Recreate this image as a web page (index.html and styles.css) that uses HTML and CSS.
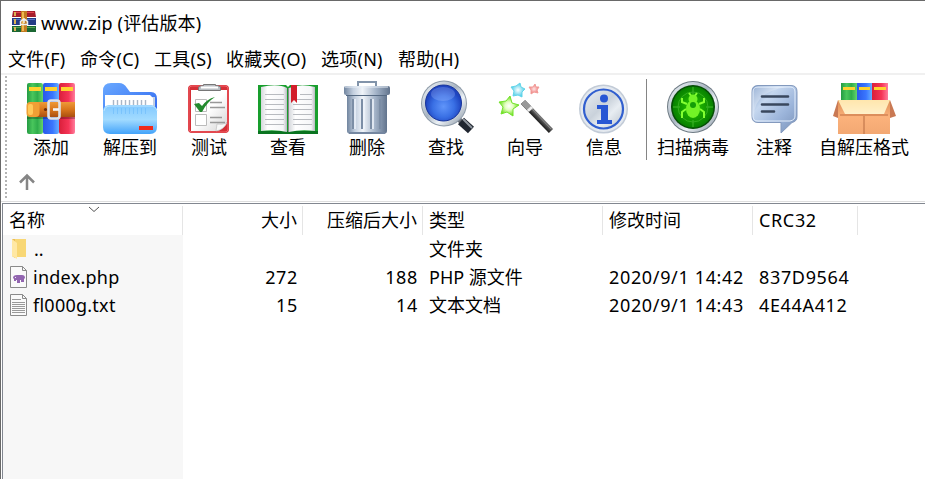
FILE: index.html
```html
<!DOCTYPE html>
<html lang="zh-CN">
<head>
<meta charset="utf-8">
<title>www.zip</title>
<link rel="stylesheet" href="styles.css">
</head>
<body>
<svg class="defs" width="0" height="0" aria-hidden="true">
  <defs>
    <linearGradient id="bookG"><stop offset="0" stop-color="#249b43"/><stop offset=".35" stop-color="#49c65c"/><stop offset=".65" stop-color="#2fad4b"/><stop offset="1" stop-color="#64d36c"/></linearGradient>
    <linearGradient id="bookB"><stop offset="0" stop-color="#2959e8"/><stop offset=".6" stop-color="#3a76ff"/><stop offset="1" stop-color="#65b0ff"/></linearGradient>
    <linearGradient id="bookR"><stop offset="0" stop-color="#d91f3a"/><stop offset=".6" stop-color="#f53557"/><stop offset="1" stop-color="#ff7c9c"/></linearGradient>
    <linearGradient id="belt" x2="0" y2="1"><stop offset="0" stop-color="#ee9a38"/><stop offset=".5" stop-color="#d9761c"/><stop offset="1" stop-color="#a94f10"/></linearGradient>
    <linearGradient id="steel"><stop offset="0" stop-color="#71859f"/><stop offset=".2" stop-color="#c3cfdf"/><stop offset=".4" stop-color="#f0f4f9"/><stop offset=".7" stop-color="#a3b3c8"/><stop offset="1" stop-color="#62748d"/></linearGradient>
    <linearGradient id="folderBack" x2="1" y2="1"><stop offset="0" stop-color="#6aa9ff"/><stop offset="1" stop-color="#2d65ef"/></linearGradient>
    <linearGradient id="folderFront" x2="0" y2="1"><stop offset="0" stop-color="#81c8ff"/><stop offset=".5" stop-color="#a2dbff"/><stop offset="1" stop-color="#43a3fa"/></linearGradient>
    <linearGradient id="page"><stop offset="0" stop-color="#d5d8dc"/><stop offset=".25" stop-color="#fff"/><stop offset=".85" stop-color="#f5f6f8"/><stop offset="1" stop-color="#b9bcc2"/></linearGradient>
    <linearGradient id="paper" x2="1" y2="1"><stop offset=".5" stop-color="#fff"/><stop offset="1" stop-color="#d4d4d4"/></linearGradient>
    <linearGradient id="rim" x2="1" y2="1"><stop offset="0" stop-color="#f4f8fb"/><stop offset=".45" stop-color="#a9b5c2"/><stop offset=".65" stop-color="#edf2f6"/><stop offset="1" stop-color="#808d9c"/></linearGradient>
    <radialGradient id="lens" cy=".6"><stop offset="0" stop-color="#6095fa"/><stop offset=".6" stop-color="#396fe4"/><stop offset="1" stop-color="#1f45c0"/></radialGradient>
    <radialGradient id="green"><stop offset="0" stop-color="#27c800"/><stop offset="1" stop-color="#078000"/></radialGradient>
    <radialGradient id="starG"><stop offset="0" stop-color="#fff"/><stop offset=".4" stop-color="#e3ffc1"/><stop offset="1" stop-color="#65db13"/></radialGradient>
    <radialGradient id="starB"><stop offset="0" stop-color="#fff"/><stop offset="1" stop-color="#48cce8"/></radialGradient>
    <radialGradient id="starR"><stop offset="0" stop-color="#ffe4e4"/><stop offset="1" stop-color="#ee7776"/></radialGradient>
    <linearGradient id="bubble" x2="1" y2="1"><stop offset="0" stop-color="#7898c6"/><stop offset=".3" stop-color="#c5d7ef"/><stop offset=".65" stop-color="#9bb4da"/><stop offset="1" stop-color="#7890b6"/></linearGradient>
    <linearGradient id="box" x2="0" y2="1"><stop offset="0" stop-color="#dd8d54"/><stop offset=".5" stop-color="#fbb27b"/><stop offset="1" stop-color="#f3a873"/></linearGradient>
    <linearGradient id="flap" x2="0" y2="1"><stop offset="0" stop-color="#ffe6ad"/><stop offset="1" stop-color="#fff0c9"/></linearGradient>
    <linearGradient id="wand" x1="1" y1="0" x2="0" y2="1"><stop offset=".4" stop-color="#8b8b8b"/><stop offset=".55" stop-color="#262626"/></linearGradient>
  </defs>
</svg>
<div class="window">
  <header class="titlebar">
    <svg class="app-icon" viewBox="0 0 24 22">
      <path fill="#a51d2c" d="M1 0h22l1 6H0z"/><path fill="#e04450" d="M2 1h20v1H1z"/>
      <path fill="#243c86" d="M0 7h24v7H0z"/><path fill="#5274c9" d="M1 8h22v1H1z"/>
      <path fill="#1b6733" d="M0 15h24v6H0z"/><path fill="#54a352" d="M1 16h22v1H1z"/>
      <path fill="#d9b354" d="M2 1h2v4H2zM2 8h2v5H2zM2 16h2v4H2z"/>
      <path fill="#c27b23" d="M9 0h6v21H9z"/><path fill="#f0b94f" d="M10 1h2v19h-2z"/>
      <path fill="none" stroke="#eee" stroke-width="1.5" d="M8.500 13.500v-3q3.500-4 7 0v3zM12 7v5"/>
    </svg>
    <span>www.zip (评估版本)</span>
  </header>
  <nav class="menu">
    <span>文件(F)</span><span class="wide">命令(C)</span><span>工具(S)</span><span class="fav">收藏夹(O)</span><span class="opt">选项(N)</span><span>帮助(H)</span>
  </nav>
  <section class="toolbar">
    <div class="grip"></div>
    <div class="bars">
      <div class="buttons">
        <div class="button"><svg viewBox="0 0 64 56">
          <rect x="8" y="3" width="16" height="51" rx="2" fill="url(#bookG)"/><rect x="24" y="3" width="16" height="51" rx="2" fill="url(#bookB)"/><rect x="40" y="3" width="16" height="51" rx="2" fill="url(#bookR)"/>
          <path fill="#ffd32e" d="M10 7h12v4H10zM26 7h12v4H26zM42 7h12v4H42z"/>
          <path fill="#000" opacity=".25" d="M8 37h48v2H8z"/>
          <path fill="url(#belt)" d="M11 22h45v15H11l-3-3v-9z"/>
          <rect x="7.500" y="22" width="13" height="15" rx="4" fill="#f09f35"/><rect x="9" y="24" width="5" height="11" rx="2" fill="#ffc95a"/>
          <circle cx="26.500" cy="29.500" r="1.600" fill="#6d2d08"/>
          <rect x="29.500" y="20.500" width="11" height="18" rx="2.500" fill="none" stroke="#dfe1e6" stroke-width="2.600"/>
          <path stroke="#f5f5f5" stroke-width="2.600" d="M34 29.500h6"/>
        </svg><span>添加</span></div>
        <div class="button"><svg viewBox="0 0 64 56">
          <path fill="url(#folderBack)" d="M5 11q0-8 8-8h8q5 0 8 5l3 4h21q6 0 6 7v18H5z"/>
          <path fill="#c4d1e3" d="M10 17h47v23H10z"/><path fill="#fff" d="M7 15h45l3 3v20H7z"/>
          <path stroke="#aab6c6" stroke-width="1.400" d="M15.500 20v6m4-6v6m4-6v6m4-6v6m4-6v6m4-6v6m4-6v6m4-6v6m4-6v6"/>
          <path fill="url(#folderFront)" d="M5 31q0-5 6-6h42q6 1 6 6v16q0 7-7 7H12q-7 0-7-7z"/>
          <path stroke="#bce6ff" fill="none" d="M6 31q1-5 6-5h40q6 0 7 5"/>
          <path stroke="#61b4fa" opacity=".45" d="M15.500 28v6m4-6v6m4-6v6m4-6v6m4-6v6m4-6v6m4-6v6m4-6v6m4-6v6"/>
          <path fill="#ef2b1b" d="M41 46h14v4H41z"/>
        </svg><span>解压到</span></div>
        <div class="button"><svg viewBox="0 0 64 56">
          <rect x="11" y="5" width="41" height="48" rx="4" fill="#d52f37"/><rect x="12" y="6" width="39" height="46" rx="3" fill="none" stroke="#f06368"/>
          <path fill="url(#paper)" d="M14 10h36v32q-3 8-11 9H14z"/><path fill="#f8f8f8" stroke="#bbb" stroke-width=".6" d="M50 43q-5 2-10 1l-1 7q7-1 11-8z"/>
          <path fill="#b9bec3" stroke="#777" d="M21.500 10.500v-3q1-2 5-2v-1h12v1q5 0 5 2v3z"/><path stroke="#fff" stroke-width="2" d="M24 7.500h17"/>
          <path fill="#fff" stroke="#bbb" d="M18.500 19.500h11v12h-11zM18.500 34.500h11v11h-11z"/>
          <path stroke="#999" stroke-width="1.300" d="M33 22.500h12M33 27.500h15M33 37.500h12M33 42.500h15"/>
          <path fill="#238a2e" d="m17 24 5-1 3 3q5-7 13-9-8 5-13 15h-2z"/>
        </svg><span>测试</span></div>
        <div class="button"><svg viewBox="0 0 64 56">
          <path fill="#189e2d" d="M2 5h28l2 2 2-2h28v49H34l-2-1-2 1H2z"/><path fill="#0a7420" d="M2 51h60v3H2z"/>
          <path fill="url(#page)" d="M5 7q17-4 26 1v44q-12-3-26-1z"/><path fill="url(#page)" d="M33 8q11-5 26-1v44q-14-2-26 1z"/>
          <path stroke="#888" d="M32.500 8v44"/>
          <path stroke="#b8bbc0" stroke-width="1.200" d="M9 14.500h19m-19 5h19m-19 5h19m-19 5h19m-19 5h19m-19 5h19m-19 5h19M37 19.500h19m-19 5h19m-19 5h19m-19 5h19m-19 5h19m-19 5h19M44 14.500h12"/>
          <path fill="#d21e2a" d="M35 5h6v18l-3-3-3 3z"/>
        </svg><span>查看</span></div>
        <div class="button"><svg viewBox="0 0 64 56">
          <path fill="none" stroke="#8294aa" stroke-width="2" d="M23 7V2h18v5"/>
          <path fill="url(#steel)" d="M12 15h40v36q0 3-4 3H16q-4 0-4-3z"/>
          <path stroke="#7c8ea6" stroke-width="2" d="M18 19v30m9-30v30m9-30v30m9-30v30"/><path stroke="#eef4fb" stroke-width="1.500" d="M20 19v30m9-30v30m9-30v30"/>
          <rect x="9" y="6" width="46" height="9" rx="2" fill="url(#steel)"/><path stroke="#566a83" d="M11 15.500h41"/><path stroke="#e9f0f8" d="M10 7h43"/>
          <path fill="#7486a0" d="M14 52h36v2H14z"/>
        </svg><span>删除</span></div>
        <div class="button"><svg viewBox="0 0 64 56">
          <path stroke="#666b73" stroke-width="5" d="m43 38 5 4"/><path stroke="#202630" stroke-width="9" d="m47 41 10 9"/><path stroke="#8f969f" stroke-width="2" d="m49 39 9 9"/>
          <circle cx="30" cy="23.500" r="23" fill="#8e9ba9"/><circle cx="30" cy="23.500" r="22" fill="url(#rim)"/><circle cx="29.500" cy="23" r="18" fill="url(#lens)" stroke="#18349a"/>
          <ellipse cx="29" cy="14" rx="12" ry="7" fill="#a3bdff" opacity=".3"/>
        </svg><span>查找</span></div>
        <div class="button"><svg viewBox="0 0 64 56">
          <path fill="url(#starG)" stroke="#73e32b" d="m17 16 2 7 7 2-6 4v7l-6-4-6 2 2-7-4-5 7-1z"/>
          <path fill="url(#starB)" stroke="#62d5e9" d="m27 3 1 4 4 2-3 3v5l-4-2-5 1 1-5-3-4 5-1z"/>
          <path fill="url(#starR)" stroke="#f19b97" d="m42 4 1 3h3l-2 3 1 3-4-1-3 2v-4l-2-3h4z"/>
          <path stroke="url(#wand)" stroke-width="6" d="m30 22 28 29"/><path stroke="#999" stroke-width="6" d="m30 22 7 7"/><path stroke="#eee" stroke-width="6" d="m36 28 2 2"/><path stroke="#888" stroke-width="1" d="m39 29 19 20"/>
        </svg><span>向导</span></div>
        <div class="button"><svg viewBox="0 0 64 56">
          <circle cx="31.500" cy="29" r="24.500" fill="#c2cbd7"/><circle cx="31.500" cy="29" r="23" fill="#e4e9ef"/><circle cx="31.500" cy="29" r="20" fill="url(#rim)" opacity=".45"/><circle cx="31.500" cy="29" r="19.500" fill="none" stroke="#315fcf" stroke-width="2.200"/>
          <circle cx="32" cy="18.500" r="4" fill="#2857d4"/><path fill="#2857d4" d="M25 25h11v15h4v4H25v-4h4V29h-4z"/>
        </svg><span>信息</span></div>
        <div class="divider"></div>
        <div class="button"><svg viewBox="0 0 64 56">
          <circle cx="32" cy="27" r="26" fill="#6d7a83"/><circle cx="32" cy="27" r="25" fill="url(#rim)"/><circle cx="32" cy="27" r="22" fill="#064d05"/><circle cx="32" cy="27" r="20.500" fill="url(#green)"/>
          <path fill="none" stroke="#43b92d" d="M32 7v7m0 26v7M12 27h7m26 0h7"/><circle cx="32" cy="27" r="15" fill="none" stroke="#34ae20"/>
          <path fill="none" stroke="#83ff31" stroke-width="2" d="m28 13 3 4m5-4-3 4M26 24l-5-2v-4m17 6 5-2v-4M25 29l-4 3v6m18-9 4 3v6"/>
          <ellipse cx="32" cy="29" rx="7" ry="9" fill="#72f326"/><circle cx="32" cy="19" r="4.500" fill="#72f326"/><circle cx="32" cy="25" r="3" fill="#149e08"/>
        </svg><span>扫描病毒</span></div>
        <div class="button comment"><svg viewBox="0 0 64 56">
          <path fill="url(#bubble)" stroke="#8399bd" d="M16 5.500h33q6 0 6 6v25q0 5-5 6L39 53V42.500H16q-6 0-6-6v-25q0-6 6-6z"/>
          <path fill="none" stroke="#e4eefb" d="M16 7h32q5 0 5 5v24q0 4-5 5H16q-5 0-5-5V12q0-5 5-5"/>
          <path fill="#fff" opacity=".25" d="M12 36Q12 12 45 7H16q-5 1-5 6z"/>
          <path stroke="#39475d" stroke-width="2.600" stroke-linecap="round" d="M20 16.500h26M20 24.500h26M20 31.500h12"/>
        </svg><span>注释</span></div>
        <div class="button sfx"><svg viewBox="0 0 64 56">
          <path fill="url(#bookG)" d="M9 3h16v20H9z"/><path fill="url(#bookB)" d="M25 3h15v20H25z"/><path fill="url(#bookR)" d="M40 3h16v20H40z"/><path fill="#ffd32e" d="M11 7h12v3H11zM27 7h11v3H27zM42 7h12v3H42z"/>
          <path fill="#c97953" d="m6 20-5 16 5 2zm52 0 6 16-6 2z"/><path fill="url(#box)" d="M6 20h52v34H6z"/><path stroke="#b86c43" d="M32 34v20"/><path fill="#dc8e5c" d="M8 34h48v2H8z"/><path fill="url(#flap)" d="M6 20h52l-6 14H13z"/>
        </svg><span>自解压格式</span></div>
      </div>
      <svg class="up" viewBox="0 0 18 18"><path fill="none" stroke="#858585" stroke-width="2.500" d="M9 17V3M2 9.500 9 2.500l7 7"/></svg>
    </div>
  </section>
  <main class="files">
    <div class="row head">
      <div class="name">名称<svg class="sort" viewBox="0 0 12 7"><path fill="none" stroke="#555" d="m1 1 5 4.500L11 1"/></svg></div>
      <div class="num">大小</div><div class="num">压缩后大小</div><div class="type">类型</div><div class="time">修改时间</div><div class="crc latin">CRC32</div>
    </div>
    <div class="row">
      <div class="name"><svg class="file-icon" viewBox="0 0 18 22"><path fill="#f8d775" d="M4 1h12v18H4z"/><path fill="#eabd58" d="M2 1h3v19l-3-2z"/><path fill="#ffe8a4" d="m2 1 5 4v16l-5-3z"/></svg><span>..</span></div>
      <div class="num"></div><div class="num"></div><div class="type">文件夹</div><div class="time"></div><div class="crc"></div>
    </div>
    <div class="row">
      <div class="name"><svg class="file-icon" viewBox="0 0 18 22"><path fill="#fafafa" stroke="#8a8a8a" d="M.500.500h12l4 4v17H.500zM12.500.500v4h4"/><path fill="#9265b0" d="M3 12q0-3 4-3h5q3 0 3 3l-1 1v3h-3v-2h-1v3H7v-3H6v1H4v-2z"/><circle cx="5.500" cy="11.500" r=".6" fill="#fff"/></svg><span class="latin file">index.php</span></div>
      <div class="num latin">272</div><div class="num latin">188</div><div class="type">PHP 源文件</div><div class="time latin">2020/9/1 14:42</div><div class="crc latin">837D9564</div>
    </div>
    <div class="row">
      <div class="name"><svg class="file-icon" viewBox="0 0 18 22"><path fill="#fafafa" stroke="#8a8a8a" d="M.500.500h12l4 4v17H.500zM12.500.500v4h4"/><path stroke="#999" d="M2 5.500h9M2 8.500h13M2 10.500h13M2 12.500h13M2 14.500h13M2 16.500h13M2 18.500h13"/></svg><span class="latin file">fl000g.txt</span></div>
      <div class="num latin">15</div><div class="num latin">14</div><div class="type">文本文档</div><div class="time latin">2020/9/1 14:43</div><div class="crc latin">4E44A412</div>
    </div>
    <div class="filler"></div>
  </main>
</div>
</body>
</html>
```
FILE: styles.css
```css
* { box-sizing: border-box; }
body {
  margin: 0;
  background: #fff;
  color: #000;
  font: 18px/28px "Noto Sans", "Noto Sans CJK SC", sans-serif;
  white-space: nowrap;
}
.defs { position: absolute; }
.window {
  width: 925px;
  height: 479px;
  border-top: 1px solid #696969;
  border-left: 1px solid #696969;
  overflow: hidden;
  display: flex;
  flex-direction: column;
}
.titlebar {
  height: 44px;
  padding-left: 11px;
  display: flex;
  align-items: center;
  gap: 5px;
  letter-spacing: .15px;
}
.app-icon { width: 24px; height: 22px; margin-top: -2px; }
.menu {
  height: 28px;
  padding-left: 7px;
  display: flex;
  letter-spacing: .25px;
}
.menu span { width: 72px; }
.menu .wide { width: 74px; }
.menu .fav { width: 95px; }
.menu .opt { width: 77px; }
.toolbar {
  height: 129px;
  padding-left: 4px;
  border-top: 2px solid #f0f0f0;
  border-bottom: 1px solid #dedede;
  display: flex;
}
.grip {
  width: 2px;
  margin: 1px 0;
  background: repeating-linear-gradient(#b4b4b4 0 2px, #fff 2px 4px);
}
.bars { padding: 5px 0 0 4.500px; }
.buttons { display: flex; height: 80px; }
.button {
  width: 79px;
  display: flex;
  flex-direction: column;
  align-items: center;
}
.button svg { width: 64px; height: 56px; flex: none; }
.button span { line-height: 22px; }
.comment { width: 83px; }
.sfx { width: 97px; }
.divider {
  width: 1px;
  margin: -1px 7px 0 2px;
  background: #858585;
}
.up { display: block; width: 18px; height: 18px; margin: 13px 0 0 6.500px; }
.files {
  flex: 1;
  margin-top: 1px;
  margin-left: 1px;
  border-top: 1px solid #828790;
  border-left: 1px solid #828790;
  display: flex;
  flex-direction: column;
}
.row {
  display: grid;
  grid-template-columns: 180px 120px 120px 180px 150px 105px;
  height: 28px;
}
.name {
  display: flex;
  align-items: center;
  gap: 6px;
  padding-left: 7px;
  background: #f7f7f7;
}
.file-icon { width: 18px; height: 22px; }
.num { text-align: right; padding-right: 5px; }
.type, .time, .crc { padding-left: 6px; }
.latin { letter-spacing: .65px; }
.file { letter-spacing: .25px; margin-left: -1px; }
.head { height: 31px; line-height: 29px; padding-top: 2px; }
.head > div { border-right: 1px solid #e5e5e5; height: 29px; }
.head .name { position: relative; background: #fff; padding-left: 6px; }
.sort { position: absolute; width: 12px; height: 7px; left: 85px; top: 0; }
.filler { flex: 1; width: 180px; background: #f7f7f7; }
```
